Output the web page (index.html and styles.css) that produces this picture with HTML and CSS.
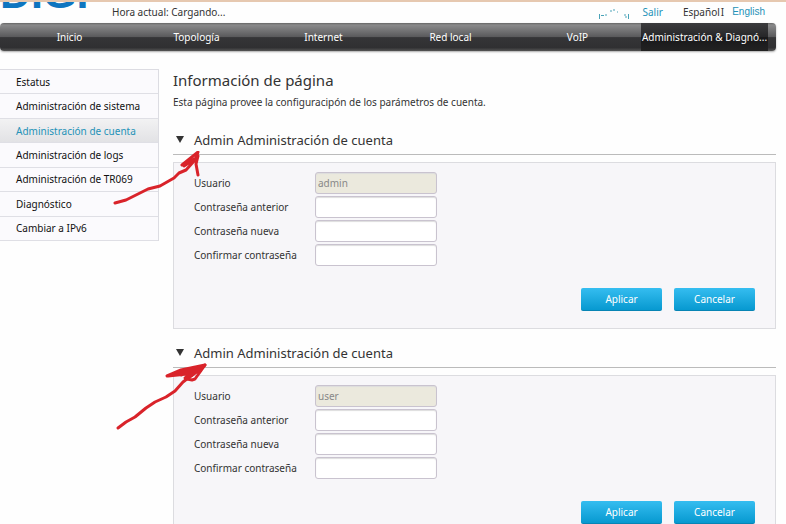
FILE: index.html
```html
<!DOCTYPE html>
<html lang="es">
<head>
    <meta charset="UTF-8">
    <meta name="viewport" content="width=device-width, initial-scale=1.0">
    <title>DIGI - Administración de cuenta</title>
    <link rel="stylesheet" href="styles.css">
</head>
<body>

    <!-- Header -->
    <header class="header">
        <div class="logo"><span>DIGI</span></div>
        <p class="clock">Hora actual: Cargando...</p>
        <div class="links">
            <svg class="erased" width="34" height="12" viewBox="0 0 34 12" fill="none" stroke="#4aa3b8" aria-hidden="true">
                <path d="M2.500 6v5M4 7.500h3M8 7h2M13 3h2M16 2h2M20 4h1M27 7h2M31.500 6v5M28 9h2"/>
            </svg>
            <a href="#">Salir</a>
            <span class="language"><a href="#" class="current">Español</a>I</span>
            <a href="#" class="english">English</a>
        </div>
    </header>

    <!-- Main menu -->
    <nav class="navbar">
        <a href="#">Inicio</a>
        <a href="#">Topología</a>
        <a href="#">Internet</a>
        <a href="#">Red local</a>
        <a href="#">VoIP</a>
        <a href="#" class="active">Administración &amp; Diagnó...</a>
    </nav>

    <div class="main">
        <!-- Side menu -->
        <nav class="sidebar">
            <a href="#">Estatus</a>
            <a href="#">Administración de sistema</a>
            <a href="#" class="active">Administración de cuenta</a>
            <a href="#">Administración de logs</a>
            <a href="#">Administración de TR069</a>
            <a href="#">Diagnóstico</a>
            <a href="#">Cambiar a IPv6</a>
        </nav>

        <main class="content">
            <h1>Información de página</h1>
            <p class="intro">Esta página provee la configuracipón de los parámetros de cuenta.</p>

            <!-- Admin account -->
            <section class="account">
                <h2>Admin Administración de cuenta</h2>
                <svg class="arrow" width="90" height="58" viewBox="0 0 90 58" aria-hidden="true">
                    <path d="M3 52L14 49L36 38L48 35L62 27L67 22L74 19L83 9M70 14L86 1L84 7L72 15M86 5L84 13L86 24"/>
                </svg>
                <form class="panel">
                    <div class="field">
                        <label for="admin-user">Usuario</label>
                        <input type="text" id="admin-user" value="admin" disabled>
                    </div>
                    <div class="field">
                        <label for="admin-old">Contraseña anterior</label>
                        <input type="password" id="admin-old">
                    </div>
                    <div class="field">
                        <label for="admin-new">Contraseña nueva</label>
                        <input type="password" id="admin-new">
                    </div>
                    <div class="field">
                        <label for="admin-confirm">Confirmar contraseña</label>
                        <input type="password" id="admin-confirm">
                    </div>
                    <div class="buttons">
                        <button type="button">Aplicar</button>
                        <button type="button">Cancelar</button>
                    </div>
                </form>
            </section>

            <!-- User account -->
            <section class="account">
                <h2>Admin Administración de cuenta</h2>
                <svg class="arrow arrow-user" width="96" height="72" viewBox="0 0 96 72" aria-hidden="true">
                    <path d="M3 67L11 61L20 56L31 47L40 41L51 36L60 30L68 21L90 4"/>
                    <path d="M52 15L66 9L90 4L80 18L77 19L72 18M53 15L72 13L86 6L70 17M60 13L82 6M66 14L84 7M76 15L84 9"/>
                </svg>
                <form class="panel">
                    <div class="field">
                        <label for="user-user">Usuario</label>
                        <input type="text" id="user-user" value="user" disabled>
                    </div>
                    <div class="field">
                        <label for="user-old">Contraseña anterior</label>
                        <input type="password" id="user-old">
                    </div>
                    <div class="field">
                        <label for="user-new">Contraseña nueva</label>
                        <input type="password" id="user-new">
                    </div>
                    <div class="field">
                        <label for="user-confirm">Confirmar contraseña</label>
                        <input type="password" id="user-confirm">
                    </div>
                    <div class="buttons">
                        <button type="button">Aplicar</button>
                        <button type="button">Cancelar</button>
                    </div>
                </form>
            </section>
        </main>
    </div>

</body>
</html>
```
FILE: styles.css
```css
* {
    margin: 0;
    padding: 0;
    box-sizing: border-box;
}

/* Scrolls without a visible bar */
html {
    scrollbar-width: none;
}

body {
    font-family: 'Noto Sans', 'Open Sans', sans-serif;
    font-size: 10px;
    line-height: 16px;
    color: #333;
    background-color: #fefefe;
    border-top: 2px solid #e6c8b0;
}

a {
    color: #2492b8;
    text-decoration: none;
}

/* Header */
.header {
    display: flex;
    height: 21px;
    padding-right: 21px;
}

.logo {
    display: flex;
    align-items: flex-end;
    width: 112px;
    height: 6px;
    overflow: hidden;
    color: #0f76c0;
    font-family: 'Liberation Sans', sans-serif;
    font-size: 43px;
    font-weight: bold;
    line-height: 30px;
}

.clock {
    padding-top: 2px;
}

.links {
    display: flex;
    margin-left: auto;
    padding-top: 2px;
}

.erased {
    margin: 4px 11px 0 0;
}

.language {
    margin: 0 8px 0 20px;
}

.language .current {
    color: #333;
    margin-right: 1px;
}

.english {
    font-family: 'Liberation Sans', sans-serif;
}

/* Main menu */
.navbar {
    display: grid;
    grid-template-columns: repeat(6, 1fr);
    height: 28px;
    margin-right: 10px;
    padding: 0 8px 0 6px;
    border-radius: 4px;
    background: linear-gradient(#666 0, #8a8a8b 2px, #59595b 50%, #353537 52%, #303032 88%, #555 100%);
    box-shadow: 0 1px 2px #aaa;
}

.navbar a {
    color: #fff;
    font-size: 10px;
    line-height: 28px;
    text-align: center;
    white-space: nowrap;
}

.navbar .active {
    background: linear-gradient(#3c3c3e 0, #262628 50%, #18181a 52%, #222 100%);
}

/* Page body */
.main {
    display: flex;
    align-items: flex-start;
    gap: 14px;
    padding: 18px 10px 0 0;
}

/* Side menu */
.sidebar {
    display: flex;
    flex-direction: column;
    width: 159px;
    height: 172px;
    border: solid #dcdce2;
    border-width: 1px 1px 0 0;
}

.sidebar a {
    display: flex;
    flex: 1;
    align-items: center;
    padding-left: 16px;
    border-bottom: 1px solid #dfdfe5;
    background-color: #fbfafd;
    color: #111;
}

.sidebar .active {
    color: #2492b8;
    background: linear-gradient(#f2f2f3, #e2e2e5);
}

/* Content */
.content {
    flex: 1;
}

h1 {
    font-size: 15px;
    font-weight: normal;
    line-height: 22px;
}

.intro {
    margin: 3px 0 20px;
}

.account {
    position: relative;
    margin-bottom: 14px;
}

h2 {
    display: flex;
    align-items: center;
    height: 25px;
    margin-bottom: 7px;
    padding-bottom: 5px;
    border-bottom: 1px solid #bbb;
    font-size: 13px;
    font-weight: normal;
}

h2::before {
    content: "";
    margin: 0 10px 0 3px;
    border: solid transparent;
    border-width: 7px 4px 0;
    border-top-color: #333;
}

.panel {
    padding: 9px 20px 17px;
    border: 1px solid #dcdce0;
    background-color: #f7f6f9;
}

.field {
    display: flex;
    align-items: center;
    margin-bottom: 2px;
}

.field label {
    width: 121px;
}

.field input {
    width: 122px;
    height: 22px;
    padding: 0 2px;
    border: 1px solid #c9c3cf;
    border-radius: 3px;
    background-color: #fff;
    box-shadow: inset 0 1px 1px #ddd;
    font: inherit;
}

.field input:disabled {
    background-color: #ebe9dd;
    color: #888;
}

.buttons {
    display: flex;
    justify-content: flex-end;
    gap: 12px;
    margin-top: 22px;
}

.buttons button {
    width: 81px;
    height: 23px;
    border: 0;
    border-bottom: 1px solid #0784b4;
    border-radius: 2px;
    background: linear-gradient(#35bdf0, #0799d0);
    color: #fff;
    font: inherit;
}

/* Red pen marks */
.arrow {
    position: absolute;
    top: 21px;
    left: -61px;
    fill: none;
    stroke: #d9232a;
    stroke-width: 3;
    stroke-linecap: round;
    stroke-linejoin: round;
}

.arrow-user {
    top: 18px;
    left: -58px;
}
```
